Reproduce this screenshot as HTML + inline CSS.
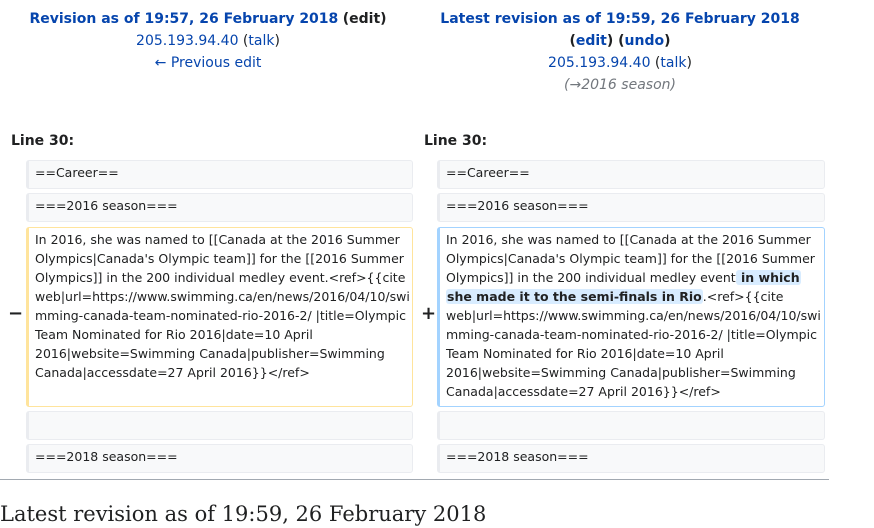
<!DOCTYPE html>
<html><head><meta charset="utf-8"><style>
*{margin:0;padding:0;box-sizing:border-box}
body{width:874px;height:515px;overflow:hidden;background:#fff;font-family:"DejaVu Sans","Liberation Sans",sans-serif;color:#202122;position:relative}
a{color:#0645ad;text-decoration:none}
.hd{position:absolute;text-align:center;font-size:14px;line-height:22px;white-space:nowrap}
.ln{position:absolute;font-weight:bold;font-size:14px;top:133px}
.box{position:absolute;background:#f8f9fa;border:1px solid #eaecf0;border-left:3px solid #eaecf0;border-radius:3px;font-size:12.5px;line-height:19px;padding:2px 0 0 6px;white-space:nowrap}
.del{background:#fff;border-color:#ffe49c}
.add{background:#fff;border-color:#a3d3ff}
.mk{position:absolute;font-size:18px;font-weight:bold}
.hl{background:#d8ecff;font-weight:bold;border-radius:3px;padding:0 1px}
</style></head><body>
<div class="hd" style="left:0;width:416px;top:8px"><a style="font-weight:bold">Revision as of 19:57, 26 February 2018</a> <b>(edit)</b><br><a>205.193.94.40</a> (<a>talk</a>)<br><a>← Previous edit</a></div>
<div class="hd" style="left:412px;width:416px;top:8px"><a style="font-weight:bold">Latest revision as of 19:59, 26 February 2018</a><br><b>(<a>edit</a>) (<a>undo</a>)</b><br><a>205.193.94.40</a> (<a>talk</a>)<br><i style="color:#72777d">(→<span>2016 season</span>)</i></div>
<div class="ln" style="left:11px">Line 30:</div>
<div class="ln" style="left:424px">Line 30:</div>

<div class="box" style="left:26px;top:160px;width:387px;height:29px">==Career==</div>
<div class="box" style="left:26px;top:193px;width:387px;height:29px">===2016 season===</div>
<div class="mk" style="left:8px;top:303px">−</div>
<div class="box del" style="left:26px;top:227px;width:387px;height:180px">In 2016, she was named to [[Canada at the 2016 Summer<br>Olympics|Canada's Olympic team]] for the [[2016 Summer<br>Olympics]] in the 200 individual medley event.&lt;ref&gt;{{cite<br>web|url=https://www.swimming.ca/en/news/2016/04/10/swi<br>mming-canada-team-nominated-rio-2016-2/ |title=Olympic<br>Team Nominated for Rio 2016|date=10 April<br>2016|website=Swimming Canada|publisher=Swimming<br>Canada|accessdate=27 April 2016}}&lt;/ref&gt;</div>
<div class="box" style="left:26px;top:411px;width:387px;height:29px"></div>
<div class="box" style="left:26px;top:444px;width:387px;height:29px">===2018 season===</div>

<div class="box" style="left:437px;top:160px;width:388px;height:29px">==Career==</div>
<div class="box" style="left:437px;top:193px;width:388px;height:29px">===2016 season===</div>
<div class="mk" style="left:421px;top:303px">+</div>
<div class="box add" style="left:437px;top:227px;width:388px;height:180px">In 2016, she was named to [[Canada at the 2016 Summer<br>Olympics|Canada's Olympic team]] for the [[2016 Summer<br>Olympics]] in the 200 individual medley event<span class="hl"> in which</span><br><span class="hl">she made it to the semi-finals in Rio</span>.&lt;ref&gt;{{cite<br>web|url=https://www.swimming.ca/en/news/2016/04/10/swi<br>mming-canada-team-nominated-rio-2016-2/ |title=Olympic<br>Team Nominated for Rio 2016|date=10 April<br>2016|website=Swimming Canada|publisher=Swimming<br>Canada|accessdate=27 April 2016}}&lt;/ref&gt;</div>
<div class="box" style="left:437px;top:411px;width:388px;height:29px"></div>
<div class="box" style="left:437px;top:444px;width:388px;height:29px">===2018 season===</div>

<div style="position:absolute;left:0;top:479px;width:829px;border-top:1px solid #a2a9b1"></div>
<div style="position:absolute;left:0;top:500px;font-family:'DejaVu Serif','Liberation Serif',serif;font-size:21px;line-height:28px;white-space:nowrap">Latest revision as of 19:59, 26 February 2018</div>
</body></html>
